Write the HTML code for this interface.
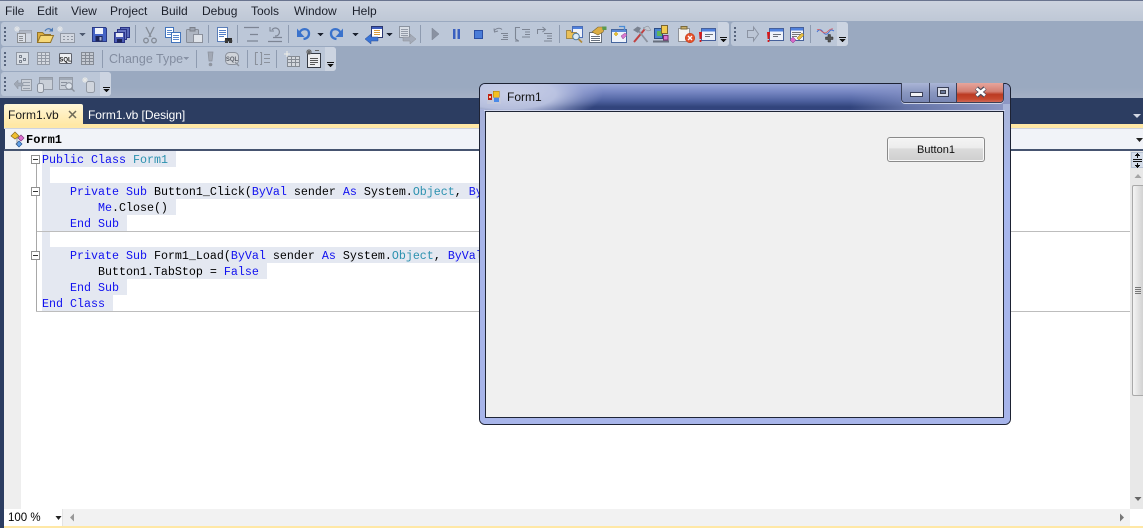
<!DOCTYPE html>
<html><head><meta charset="utf-8"><style>
html,body{margin:0;padding:0;background:#fff}
#p{position:relative;width:1143px;height:528px;overflow:hidden;background:#9aa9c0;font-family:"Liberation Sans",sans-serif;font-size:12px}
#p div,#p span.a{position:absolute}
.m{top:4px;color:#1b1f2a;font-size:12px;line-height:14px;white-space:nowrap}
.bar{background:#bcc7d8;border-radius:3px}
.bg{background:#e4e8f1}
.c{position:absolute;white-space:pre;font-family:"Liberation Mono",monospace;font-size:11.67px;line-height:16px;color:#000;left:42px;height:16px;margin-top:1px}
.k{color:#1010f0}.t{color:#2b91af}
.sep{width:1px;background:#8e9bb0}
svg{position:absolute;left:0;top:0}
</style></head><body><div id="p">
<div style="left:0;top:72px;width:1143px;height:26px;background:linear-gradient(#9aa9c0,#9aa9c0 60%,#a4b0c5)"></div>
<div style="left:0;top:0;width:1143px;height:1px;background:#69748f"></div>
<div style="left:0;top:1px;width:1143px;height:20px;background:linear-gradient(#ccd3df,#bfc8d6)"></div>
<div class="m" style="left:5px">File</div><div class="m" style="left:37px">Edit</div><div class="m" style="left:71px">View</div><div class="m" style="left:110px">Project</div><div class="m" style="left:161px">Build</div><div class="m" style="left:202px">Debug</div><div class="m" style="left:251px">Tools</div><div class="m" style="left:294px">Window</div><div class="m" style="left:352px">Help</div>

<div class="bar" style="left:1px;top:22px;width:728px;height:24px"></div>
<div style="left:718px;top:22px;width:11px;height:24px;background:#ccd4e1;border-radius:0 3px 3px 0"></div>
<div class="bar" style="left:731px;top:22px;width:117px;height:24px"></div>
<div style="left:837px;top:22px;width:11px;height:24px;background:#ccd4e1;border-radius:0 3px 3px 0"></div>
<div class="bar" style="left:1px;top:47px;width:335px;height:24px"></div>
<div style="left:325px;top:47px;width:11px;height:24px;background:#ccd4e1;border-radius:0 3px 3px 0"></div>
<div class="bar" style="left:1px;top:72px;width:110px;height:24px"></div>
<div style="left:100px;top:72px;width:11px;height:24px;background:#ccd4e1;border-radius:0 3px 3px 0"></div>

<div class="sep" style="left:135px;top:25px;height:18px"></div><div class="sep" style="left:208px;top:25px;height:18px"></div><div class="sep" style="left:237px;top:25px;height:18px"></div><div class="sep" style="left:288px;top:25px;height:18px"></div><div class="sep" style="left:420px;top:25px;height:18px"></div><div class="sep" style="left:559px;top:25px;height:18px"></div><div class="sep" style="left:810px;top:25px;height:18px"></div>
<div class="sep" style="left:102px;top:50px;height:18px"></div><div class="sep" style="left:196px;top:50px;height:18px"></div><div class="sep" style="left:247px;top:50px;height:18px"></div><div class="sep" style="left:276px;top:50px;height:18px"></div>
<div style="left:109px;top:52px;color:#838da0;font-size:12.5px;line-height:14px;white-space:nowrap">Change Type</div>

<svg width="1143" height="98" viewBox="0 0 1143 98" shape-rendering="crispEdges">
<g fill="#57647c"><rect x="4" y="27" width="2" height="2"/><rect x="4" y="31" width="2" height="2"/><rect x="4" y="35" width="2" height="2"/><rect x="4" y="39" width="2" height="2"/><rect x="4" y="52" width="2" height="2"/><rect x="4" y="56" width="2" height="2"/><rect x="4" y="60" width="2" height="2"/><rect x="4" y="64" width="2" height="2"/><rect x="4" y="77" width="2" height="2"/><rect x="4" y="81" width="2" height="2"/><rect x="4" y="85" width="2" height="2"/><rect x="4" y="89" width="2" height="2"/><rect x="734" y="27" width="2" height="2"/><rect x="734" y="31" width="2" height="2"/><rect x="734" y="35" width="2" height="2"/><rect x="734" y="39" width="2" height="2"/></g>
<g fill="#111"><rect x="720" y="37" width="7" height="1"/><path d="M720 39h7l-3.500 3z"/><rect x="839" y="37" width="7" height="1"/><path d="M839 39h7l-3.500 3z"/><rect x="327" y="62" width="7" height="1"/><path d="M327 64h7l-3.500 3z"/><rect x="103" y="87" width="7" height="1"/><path d="M103 89h7l-3.500 3z"/></g>
<g fill="#4e5a70"><path d="M79 33h7l-3.500 3z"/></g>
<g fill="#1c2230"><path d="M317 33h7l-3.500 3z"/><path d="M352 33h7l-3.500 3z"/><path d="M386 33h7l-3.500 3z"/></g>
<path d="M183 57h6l-3 3z" fill="#8892a5"/>
<g shape-rendering="auto">
<!-- new project -->
<g transform="translate(14,26)" opacity=".7"><rect x="5.500" y="4.500" width="12" height="12" fill="#d9dde4" stroke="#858b96"/><rect x="5.500" y="4.500" width="12" height="3" fill="#aab0bb"/><rect x="3.500" y="7.500" width="8" height="9" fill="#e8eaee" stroke="#777"/><path d="M5 10.500h4M5 12.500h4M5 14.500h4" stroke="#777"/><path d="M3 0v6M0 3h6M1 1l4 4M5 1l-4 4" stroke="#f3f3f0"/></g>
<!-- open -->
<g transform="translate(36,26)"><path d="M1.500 6.500h5l2 2h6v8h-13z" fill="#dcae40" stroke="#94742a"/><path d="M1.500 16.500l3-7h13l-3 7z" fill="#f6d878" stroke="#94742a"/><path d="M9 5c2-3 5-3 6.500-.5" fill="none" stroke="#4b78b4" stroke-width="1.200"/><path d="M17 1.500v4h-4z" fill="#4b78b4"/></g>
<!-- add -->
<g transform="translate(57,26)" opacity=".7"><rect x="3.500" y="7.500" width="14" height="9" fill="#dcdfe4" stroke="#80858f"/><path d="M6 10.500h2M10 10.500h2M14 10.500h2M6 13.500h2M10 13.500h2M14 13.500h2" stroke="#7c828c"/><path d="M3 0v6M0 3h6M1 1l4 4M5 1l-4 4" stroke="#f3f3f0"/></g>
<!-- save -->
<g transform="translate(91,26)"><path d="M1.500 1.500h13l1 1v13h-14z" fill="#4563c4" stroke="#2a3a86"/><rect x="4" y="2" width="8" height="6" fill="#f0f3fb"/><rect x="4.500" y="10" width="7" height="5.500" fill="#1d2558"/><rect x="8.500" y="11" width="2" height="3.500" fill="#a9b2d6"/></g>
<!-- save all -->
<g transform="translate(113,26)"><rect x="7.500" y="1.500" width="9" height="10" fill="#5a6ab8" stroke="#2a3486"/><rect x="4.500" y="3.500" width="9" height="10" fill="#6472c0" stroke="#2a3486"/><rect x="1.500" y="6.500" width="10" height="10" fill="#4b5bb4" stroke="#2a3486"/><rect x="3" y="7" width="7" height="4" fill="#e8ebf6"/><rect x="4" y="13" width="5" height="3.500" fill="#1d2458"/></g>
<!-- cut -->
<g transform="translate(141,26)" fill="none" stroke="#858c97" stroke-width="1.300"><path d="M5 1l5 10M13 1l-5 10"/><circle cx="5" cy="14.500" r="2.300"/><circle cx="13" cy="14.500" r="2.300"/></g>
<!-- copy -->
<g transform="translate(164,26)"><rect x="1.500" y="1.500" width="8" height="10" fill="#fff" stroke="#4274bc"/><path d="M3 4.500h5M3 6.500h5M3 8.500h5" stroke="#5a88cc"/><rect x="7.500" y="6.500" width="9" height="10" fill="#fff" stroke="#4274bc"/><path d="M9 9.500h6M9 11.500h6M9 13.500h6" stroke="#5a88cc"/></g>
<!-- paste -->
<g transform="translate(185,26)" opacity=".8"><rect x="1.500" y="3.500" width="12" height="13" rx="1" fill="#adb3bd" stroke="#7a7f89"/><rect x="5" y="1.500" width="5" height="3.500" fill="#949aa5" stroke="#6d7079"/><rect x="8.500" y="8.500" width="9" height="8" fill="#e8eaee" stroke="#7f838c"/></g>
<!-- find -->
<g transform="translate(216,26)"><rect x="1.500" y="1.500" width="10" height="14" fill="#fff" stroke="#5b7eb8"/><path d="M3 4.500h7M3 6.500h7M3 8.500h7M3 10.500h5" stroke="#5480c8"/><path d="M9 12h7v5h-3v-2h-1v2H9z" fill="#2a2a2a"/><circle cx="10.500" cy="15" r="1.800" fill="#3a3a3a"/><circle cx="14.500" cy="15" r="1.800" fill="#3a3a3a"/></g>
<!-- indent -->
<g stroke="#7d8594" stroke-width="1.200"><path d="M244 27.500h15M250 34.500h8M247 41h11"/></g>
<g fill="none" stroke="#7d8594" stroke-width="1.200"><path d="M268 41.500h14M273 37.500h9"/><path d="M272 30a4 4 0 1 1 3 6"/><path d="M270 27v4h4" stroke-width="1"/></g>
<!-- undo -->
<path d="M299.500 33C301 28 309 27.500 309 33.500C309 36.500 307 38.500 303.500 39" fill="none" stroke="#3a72cc" stroke-width="2.300"/><path d="M297 28.500v8.500h7.500z" fill="#3a72cc"/>
<!-- redo -->
<path d="M340.500 33C339 28 331 27.500 331 33.500C331 36.500 333 38.500 336.500 39" fill="none" stroke="#3a72cc" stroke-width="2.300"/><path d="M343 28.500v8.500h-7.500z" fill="#3a72cc"/>
<!-- back -->
<g transform="translate(365,26)"><rect x="6.500" y=".5" width="11" height="11" fill="#fff" stroke="#2a3670"/><rect x="7" y="1" width="10" height="2" fill="#3e5cbc"/><path d="M9 4.500h6M9 6.500h6M9 8.500h6" stroke="#d89a3a"/><path d="M0 13l6-5v3h7v4H6v3z" fill="#3a74d6" stroke="#2a4c92" stroke-width=".5"/></g>
<!-- fwd -->
<g transform="translate(398,26)" opacity=".7"><rect x="1.500" y=".5" width="10" height="11" fill="#e8eaee" stroke="#767c88"/><path d="M3 3.500h7M3 5.500h7M3 7.500h7M3 9.500h7" stroke="#858b96"/><path d="M18 13l-6-5v3H5v4h7v3z" fill="#9aa0ac" stroke="#777" stroke-width=".5"/></g>
<!-- play/pause/stop -->
<path d="M432 28v12l7-6z" fill="#8a92a2" stroke="#7a8292" stroke-width=".5"/>
<rect x="453" y="29" width="2.500" height="10" fill="#3a60c0"/><rect x="457.500" y="29" width="2.500" height="10" fill="#3a60c0"/>
<rect x="474.500" y="30.500" width="8" height="8" fill="#4a7cd8" stroke="#2a4ea4"/>
<!-- steps -->
<g fill="none" stroke="#7d8594" stroke-width="1"><path d="M494 31c2-3 6-3.500 8-1.500M494 28.500l.5 3.500 3.500-1M501 33.500h7M503 35.500h5M503 37.500h5M501 39.500h7"/></g>
<g fill="none" stroke="#7d8594" stroke-width="1.100"><path d="M520 27.500h-4.500v11.500l3 2M515 41h4M522 29.500h8M525 32h5M525 34.500h5M522 37h8"/></g>
<g fill="none" stroke="#7d8594" stroke-width="1"><path d="M537.500 34v-4.500h8M542.500 27l3 2.500-3 2.500M544 33.500h8M547 36h5M547 38.500h5M544 41h8"/></g>
<!-- solution explorer group -->
<g transform="translate(566,25)"><rect x="6.500" y="1.500" width="10" height="11" fill="#eef2fa" stroke="#4a6cb4"/><rect x="7" y="2" width="9" height="2" fill="#4f80dc"/><path d="M.5 5.500h4l1 2h5v6h-10z" fill="#eac058" stroke="#94742a" stroke-width=".7"/><circle cx="10" cy="11.500" r="3.300" fill="#dcebf6" stroke="#4a789e" stroke-width="1"/><path d="M12.500 14l3.500 3.500" stroke="#b08a3c" stroke-width="1.800"/></g>
<g transform="translate(588,25)"><rect x="1.500" y="7.500" width="12" height="10" fill="#fff" stroke="#66707e"/><path d="M3 11.500h9M3 13.500h9M3 15.500h9" stroke="#66707e"/><path d="M4 7l6-5h7l-2 5-5 3z" fill="#dcae44" stroke="#7a6430" stroke-width=".6"/><path d="M14 1.500h4.500v3.500h-4z" fill="#5a9a50"/></g>
<g transform="translate(610,25)"><rect x="1.500" y="4.500" width="15" height="13" fill="#eef3fb" stroke="#46669e"/><rect x="2" y="5" width="14" height="2" fill="#5a88d6"/><path d="M4 9l2-2 2 2-2 2z" fill="#e8c030" stroke="#c09a20" stroke-width=".5"/><path d="M11 11l4-3 2 2-4 4z" fill="#d878d0" stroke="#90488a" stroke-width=".5"/><path d="M9 1.500h5.500v4" fill="none" stroke="#4a8cd6" stroke-width="1.300"/></g>
<g transform="translate(632,25)"><path d="M2 17L12.500 4.500" stroke="#c04040" stroke-width="2"/><path d="M15.500 17L6 5" stroke="#8b929e" stroke-width="1.800"/><path d="M1 5l4.500-3.500 3.500 1.500-3 5z" fill="#7a8290"/><path d="M11 3l5-2 3 4-3 1z" fill="#c2c8d2" stroke="#7a7f8a" stroke-width=".5"/></g>
<g transform="translate(653,25)"><rect x="1.500" y="3.500" width="8" height="10" fill="#4a86d0" stroke="#2a4a84"/><rect x="4" y="6" width="5" height="5" fill="#5cb45c"/><rect x="8.500" y=".5" width="6" height="8" fill="#f2ca50" stroke="#7a6430"/><rect x="10.500" y="10.500" width="4.500" height="4.500" fill="#da72cc" stroke="#7a3070"/><rect x="0" y="15.500" width="16" height="2" fill="#666e7c"/></g>
<g transform="translate(677,25)"><rect x="1.500" y="3.500" width="11" height="13" fill="#f4f4f2" stroke="#8f939b"/><rect x="4" y="1.500" width="6" height="2.500" fill="#c8ae6a" stroke="#7a6a3c"/><circle cx="13" cy="13" r="4.800" fill="#e4502a" stroke="#b43c18" stroke-width=".5"/><path d="M11 11l4 4M15 11l-4 4" stroke="#fff" stroke-width="1.400"/></g>
<g transform="translate(699,26)"><rect x="2.500" y="2.500" width="14" height="12" fill="#eef2fa" stroke="#46609a"/><rect x="3" y="3" width="13" height="2.500" fill="#4f80dc"/><path d="M6 8.500h8M6 10.500h5" stroke="#6a6f7a"/><path d="M0 6h3l-.6 7H.6zM.6 14h1.800v2H.6z" fill="#d81818"/></g>
<!-- second group -->
<path d="M747.500 30.500h6v-3.500l5 7-5 7v-3.500h-6z" fill="#bcc6d6" stroke="#8b93a2"/>
<g transform="translate(767,26)"><rect x="2.500" y="2.500" width="14" height="12" fill="#eef2fa" stroke="#46609a"/><rect x="3" y="3" width="13" height="2.500" fill="#4f80dc"/><path d="M6 8.500h8M6 10.500h5" stroke="#6a6f7a"/><path d="M0 6h3l-.6 7H.6zM.6 14h1.800v2H.6z" fill="#d81818"/></g>
<g transform="translate(788,26)"><rect x="2.500" y="1.500" width="13" height="13" fill="#f2f5fb" stroke="#46609a"/><rect x="3" y="2" width="12" height="2.500" fill="#4f80dc"/><path d="M4 6.500h9M4 8.500h9M4 10.500h5" stroke="#777"/><path d="M9 12l5-5 2 2-5 5z" fill="#e8c040" stroke="#7a6020" stroke-width=".5"/><path d="M2 14l3-3 3 3-3 3z" fill="#d868c8" stroke="#80408a" stroke-width=".5"/></g>
<g transform="translate(816,26)"><path d="M1 6c2-3 4-3 6 0s4 3 6 0 3-2 5-1" fill="none" stroke="#4070d6" stroke-width=".9"/><path d="M1 4c3-2 5 3 8 3s4-5 8-4" fill="none" stroke="#dc5050" stroke-width=".7"/><path d="M9.500 11h2.500V8.500h2.500V11h2.500v2.500h-2.500V16H12v-2.500H9.500z" fill="#555" stroke="#2a2a2a" stroke-width=".5"/></g>
<!-- row 2 -->
<g transform="translate(14,51)" opacity=".8"><rect x="2.500" y="1.500" width="12" height="12" fill="#e2e5ea" stroke="#868c96"/><path d="M5.500 4.500h2v2h-2zM9.500 7.500h2v2h-2zM5.500 9.500h2v2h-2z" fill="none" stroke="#6d737e"/></g>
<g transform="translate(36,51)" stroke="#949aa5"><rect x="1.500" y="1.500" width="12" height="12" fill="#d5d9e0"/><path d="M1.500 4.500h12M1.500 7.500h12M1.500 10.500h12M5.500 1.500v12M9.500 1.500v12" fill="none"/></g>
<g transform="translate(58,51)"><rect x="1.500" y="2.500" width="12" height="10" rx="1" fill="#eef0f3" stroke="#5e626c"/><text x="7.500" y="10.300" font-family="Liberation Sans" font-size="6" text-anchor="middle" fill="#222" font-weight="bold">SQL</text></g>
<g transform="translate(80,51)" stroke="#858b95"><rect x="1.500" y="1.500" width="12" height="12" fill="#c5cad2"/><path d="M1.500 4.500h12M1.500 7.500h12M1.500 10.500h12M5.500 1.500v12M9.500 1.500v12" fill="none"/></g>
<g transform="translate(203,51)"><path d="M5 1h5l-1 9H6z" fill="#a2a8b4" stroke="#8b919c" stroke-width=".7"/><circle cx="7.500" cy="13.500" r="1.800" fill="#8f95a0"/></g>
<g transform="translate(225,51)"><rect x=".5" y="1.500" width="13" height="12" rx="4" fill="#d0d4da" stroke="#8b919c"/><text x="7" y="10" font-family="Liberation Sans" font-size="6" text-anchor="middle" fill="#5c616b" font-weight="bold">SQL</text><path d="M10 11l4 4" stroke="#8b919c" stroke-width="1.300"/></g>
<g transform="translate(254,51)" fill="none" stroke="#8b919c"><path d="M4 1.500H1.500v12H4M6 1.500h1.500v12H6" stroke-width="1.100"/><path d="M10 3.500h6M10 7.500h6M10 11.500h6" stroke-width="1.100"/></g>
<g transform="translate(283,50)"><rect x="4.500" y="6.500" width="12" height="10" fill="#d4d8de" stroke="#858b94"/><path d="M4.500 9.500h12M4.500 12.500h12M8.500 6.500v10M12.500 6.500v10" stroke="#858b94"/><path d="M4 1v6M1 4h6" stroke="#f0efe8"/></g>
<g transform="translate(305,49)"><rect x="2.500" y="4.500" width="13" height="14" fill="#ecedf0" stroke="#353a44"/><path d="M5 9.500h8M5 11.500h8M5 13.500h8M5 15.500h5" stroke="#555"/><path d="M4 0v6M1 3h6M2 1l4 4M6 1l-4 4" stroke="#666"/><path d="M10 1.500h4" stroke="#666"/></g>
<!-- row 3 -->
<g transform="translate(14,76)" opacity=".8"><rect x="7.500" y="3.500" width="10" height="11" fill="#d0d4da" stroke="#8b919c"/><path d="M9 6.500h7M9 9.500h7M9 12.500h7" stroke="#9097a2"/><path d="M0 8l4-4v3h5v3H4v3z" fill="#9aa1ad" stroke="#7d838e" stroke-width=".5"/></g>
<g transform="translate(36,76)" opacity=".8"><rect x="3.500" y="1.500" width="13" height="12" fill="#cdd2d9" stroke="#8b919c"/><rect x="4" y="2" width="12" height="2" fill="#9aa2ae"/><rect x="1.500" y="7.500" width="6" height="9" rx="2" fill="#e6e8ec" stroke="#7d838e"/></g>
<g transform="translate(58,76)" opacity=".8"><rect x="1.500" y="1.500" width="13" height="12" fill="#cdd2d9" stroke="#8b919c"/><rect x="2" y="2" width="12" height="2" fill="#9aa2ae"/><path d="M3 6.500h6M3 9.500h4" stroke="#7d838e"/><circle cx="11" cy="10" r="3.300" fill="#e6ebf0" stroke="#7d838e"/><path d="M13.500 12.500l3 3" stroke="#7d838e" stroke-width="1.300"/></g>
<g transform="translate(81,76)" opacity=".85"><path d="M4 1v6M1 4h6M2 2l4 4M6 2l-4 4" stroke="#f0f0ea"/><rect x="5.500" y="5.500" width="8" height="11" rx="2" fill="#d4d8de" stroke="#8b919c"/></g>
</g>
</svg>

<!-- dark doc area -->
<div style="left:0;top:98px;width:1143px;height:26px;background:#2c3d61"></div>
<div style="left:4px;top:104px;width:79px;height:20px;background:linear-gradient(#fff6d8,#ffe9a8);border-radius:2px 2px 0 0"></div>
<div style="left:8px;top:108px;color:#1a1a1a;font-size:12px;line-height:14px">Form1.vb</div>
<svg style="left:67px;top:109px" width="12" height="12"><path d="M2 2l7 7M9 2l-7 7" stroke="#6f6a58" stroke-width="1.500"/></svg>
<div style="left:88px;top:108px;color:#fff;font-size:12px;line-height:14px;white-space:nowrap;letter-spacing:-.05px">Form1.vb [Design]</div>
<svg style="left:1132px;top:113px" width="10" height="6"><path d="M1 1h8l-4 4z" fill="#d4d9e4"/></svg>
<div style="left:0;top:124px;width:1143px;height:404px;background:#2c3d61"></div>
<div style="left:4px;top:124px;width:1139px;height:4px;background:#ffe8a6"></div>
<div style="left:5px;top:129px;width:1138px;height:20px;background:#f1f3f8"></div>
<div style="left:4px;top:128px;width:1139px;height:1px;background:#cdd3e0"></div>
<div style="left:4px;top:149px;width:1139px;height:2px;background:#465470"></div>
<svg style="left:9px;top:131px" width="18" height="18"><path d="M6 1l4 4-4 3-4-3z" fill="#f0c030" stroke="#8a6a20" stroke-width=".7"/><path d="M12 4l3 3-3 3-3-3z" fill="#e070d0" stroke="#803880" stroke-width=".7"/><path d="M10 10l3 3-3 3-3-3z" fill="#60a0e8" stroke="#205090" stroke-width=".7"/><path d="M8 7v7M8 7h2" stroke="#666" stroke-width=".6" fill="none"/></svg>
<div style="left:26px;top:133px;font-weight:bold;line-height:15px;color:#000;font-family:'Liberation Mono',monospace;font-size:12px">Form1</div>
<svg style="left:1136px;top:137px" width="7" height="6"><path d="M0 1h7l-3.500 4z" fill="#222"/></svg>

<!-- editor -->
<div style="left:4px;top:151px;width:1139px;height:358px;background:#fff"></div>
<div style="left:4px;top:151px;width:17px;height:358px;background:#eeeeee"></div>
<div class="bg" style="left:42px;top:151px;width:134px;height:16px"></div>
<div class="bg" style="left:42px;top:167px;width:8px;height:16px"></div>
<div class="bg" style="left:42px;top:183px;width:440px;height:16px"></div>
<div class="bg" style="left:42px;top:199px;width:134px;height:16px"></div>
<div class="bg" style="left:42px;top:215px;width:85px;height:16px"></div>
<div class="bg" style="left:42px;top:232px;width:8px;height:15px"></div>
<div class="bg" style="left:42px;top:247px;width:440px;height:16px"></div>
<div class="bg" style="left:42px;top:263px;width:225px;height:16px"></div>
<div class="bg" style="left:42px;top:279px;width:85px;height:16px"></div>
<div class="bg" style="left:42px;top:295px;width:71px;height:16px"></div>
<div style="left:36px;top:231px;width:1094px;height:1px;background:#bdbdbd"></div>
<div style="left:36px;top:311px;width:1094px;height:1px;background:#bdbdbd"></div>
<div style="left:36px;top:163px;width:1px;height:148px;background:#a8a8a8"></div>
<svg style="left:31px;top:155px" width="9" height="106"><g fill="#fff" stroke="#8f8f8f"><rect x=".5" y=".5" width="8" height="8"/><rect x=".5" y="32.500" width="8" height="8"/><rect x=".5" y="96.500" width="8" height="8"/></g><path d="M2 4.500h5M2 36.500h5M2 100.500h5" stroke="#333"/></svg>

<div class="c" style="top:151px"><span class="k">Public</span> <span class="k">Class</span> <span class="t">Form1</span></div>
<div class="c" style="top:183px">    <span class="k">Private</span> <span class="k">Sub</span> Button1_Click(<span class="k">ByVal</span> sender <span class="k">As</span> System.<span class="t">Object</span>, <span class="k">By</span></div>
<div class="c" style="top:199px">        <span class="k">Me</span>.Close()</div>
<div class="c" style="top:215px">    <span class="k">End</span> <span class="k">Sub</span></div>
<div class="c" style="top:247px">    <span class="k">Private</span> <span class="k">Sub</span> Form1_Load(<span class="k">ByVal</span> sender <span class="k">As</span> System.<span class="t">Object</span>, <span class="k">ByVal</span></div>
<div class="c" style="top:263px">        Button1.TabStop = <span class="k">False</span></div>
<div class="c" style="top:279px">    <span class="k">End</span> <span class="k">Sub</span></div>
<div class="c" style="top:295px"><span class="k">End</span> <span class="k">Class</span></div>

<!-- scrollbar -->
<div style="left:1130px;top:151px;width:13px;height:358px;background:#e8e8e8"></div>
<div style="left:1131px;top:152px;width:12px;height:16px;background:#d5dde9;border:1px solid #b8c3d4;border-right:0;box-sizing:border-box"></div>
<svg style="left:1131px;top:152px" width="12" height="17" shape-rendering="crispEdges"><path d="M2 7.500h9M2 9.500h9" stroke="#111"/><path d="M6 1h1v1h1v1h1v1H7v2H6V4H4V3h1V2h1zM6 11h1v2h2v1H8v1H7v1H6v-1H5v-1H4v-1h2z" fill="#111"/></svg>
<svg style="left:1134px;top:173px" width="8" height="6"><path d="M4 1l3.500 4H.5z" fill="#a5a5a5"/></svg>
<div style="left:1132px;top:185px;width:11px;height:211px;box-sizing:border-box;border:1px solid #a9a9a9;border-right:0;border-radius:2px 0 0 2px;background:linear-gradient(90deg,#f4f4f4,#d2d2d2)"></div>
<div style="left:1135px;top:287px;width:6px;height:1px;background:#777;box-shadow:0 2px #777,0 4px #777,0 6px #777"></div>
<svg style="left:1134px;top:496px" width="8" height="6"><path d="M.5 1h7L4 5z" fill="#666"/></svg>

<!-- bottom -->
<div style="left:4px;top:509px;width:1139px;height:17px;background:#f2f2f2"></div>
<div style="left:4px;top:509px;width:59px;height:17px;background:#fff;border-right:1px solid #e4e4e4;box-sizing:border-box"></div>
<div style="left:8px;top:511px;font-size:11.5px;line-height:14px;color:#000">100 %</div>
<svg style="left:55px;top:516px" width="8" height="5"><path d="M.5 0h6L3.500 4z" fill="#222"/></svg>
<svg style="left:69px;top:513px" width="6" height="9"><path d="M5 .5v8L1 4.500z" fill="#999"/></svg>
<svg style="left:1119px;top:513px" width="6" height="9"><path d="M1 .5v8l4-4z" fill="#777"/></svg>
<div style="left:1130px;top:509px;width:13px;height:17px;background:#fff"></div>
<div style="left:4px;top:526px;width:1139px;height:2px;background:#ffe8a6"></div>

<!-- Form window -->
<div style="left:479px;top:83px;width:532px;height:342px;box-sizing:border-box;border:1px solid #1d2233;border-radius:6px;overflow:hidden;background:#a8b5ea">
  <div style="left:0;top:0;width:530px;height:27px;background:linear-gradient(#98a6d6 0,#7686c2 30%,#4f62a0 62%,#31447c 85%,#34457e 100%)"></div>
  <div style="left:0;top:-4px;width:190px;height:36px;background:radial-gradient(ellipse 95px 30px at 28px 14px,rgba(200,206,230,1) 0,rgba(192,200,228,.92) 50%,rgba(170,180,220,.4) 80%,rgba(150,160,210,0) 100%)"></div>
  <div style="left:370px;top:0;width:160px;height:27px;background:linear-gradient(90deg,rgba(138,150,198,0) 0,rgba(138,150,198,.55) 35%,rgba(146,156,200,.95) 100%)"></div>
  <div style="left:523px;top:20px;width:7px;height:320px;background:linear-gradient(#a9b5d8,#a8b8ee 25%,#a6b4ea)"></div>
  <div style="left:0;top:25px;width:5px;height:315px;background:linear-gradient(#a6b0d8,#a8b5ea 30%)"></div>
</div>
<div style="left:485px;top:111px;width:519px;height:307px;box-sizing:border-box;border:1px solid #1f2536;background:#f0f0f0"></div>
<div style="left:484px;top:110px;width:521px;height:1px;background:#d0d6ec"></div>
<svg style="left:487px;top:90px" width="14" height="14" shape-rendering="crispEdges"><rect x="0" y="0" width="14" height="14" fill="#c8ccd8" opacity=".6"/><rect x="1" y="4" width="4" height="6" fill="#c02010"/><rect x="2" y="6" width="2" height="2" fill="#f0d0b0"/><rect x="6" y="1" width="6" height="6" fill="#f4c020" stroke="#a07810" stroke-width=".5"/><rect x="7" y="8" width="5" height="4" fill="#4a8ae8"/></svg>
<div style="left:507px;top:90px;font-size:12px;line-height:14px;color:#111">Form1</div>

<div style="left:901px;top:83px;width:103px;height:20px;box-sizing:border-box;border:1px solid #3a4058;border-top:0;border-radius:0 0 4px 4px;overflow:hidden;box-shadow:0 1px 0 #cdd3e6">
  <div style="left:0;top:0;width:27px;height:19px;background:linear-gradient(#aab5d6,#8a97c0 50%,#7886b4);border-right:1px solid #3a4058"></div>
  <div style="left:28px;top:0;width:26px;height:19px;background:linear-gradient(#aab5d6,#8a97c0 50%,#7886b4);border-right:1px solid #3a4058"></div>
  <div style="left:55px;top:0;width:47px;height:19px;background:linear-gradient(#e6a59c,#d47f72 45%,#bb3a22 60%,#c74a30 85%,#d06858)"></div>
</div>
<div style="left:910px;top:92px;width:11px;height:3px;background:#f2f3f6;border:1px solid #3a4058"></div>
<div style="left:937px;top:87px;width:10px;height:8px;background:#d8dce8;border:1px solid #3a4058"></div>
<div style="left:940px;top:90px;width:4px;height:2px;background:#6a7898;border:1px solid #3c4050"></div>
<svg style="left:974px;top:86px" width="14" height="12"><path d="M2.500 2l8.500 8M11 2l-8.500 8" stroke="#4a4a5a" stroke-width="4.500"/><path d="M2.500 2.500l8.500 7M11 2.500l-8.500 7" stroke="#fff" stroke-width="2.600"/></svg>

<div style="left:887px;top:137px;width:98px;height:25px;box-sizing:border-box;border:1px solid #8a8a8a;border-radius:3px;background:linear-gradient(#f4f4f4 0,#ececec 44%,#dbdbdb 46%,#cfcfcf 100%);box-shadow:inset 0 0 0 1px #f8f8f8"></div>
<div style="left:887px;top:143px;width:98px;text-align:center;font-size:11px;line-height:14px;color:#111">Button1</div>
</div></body></html>
